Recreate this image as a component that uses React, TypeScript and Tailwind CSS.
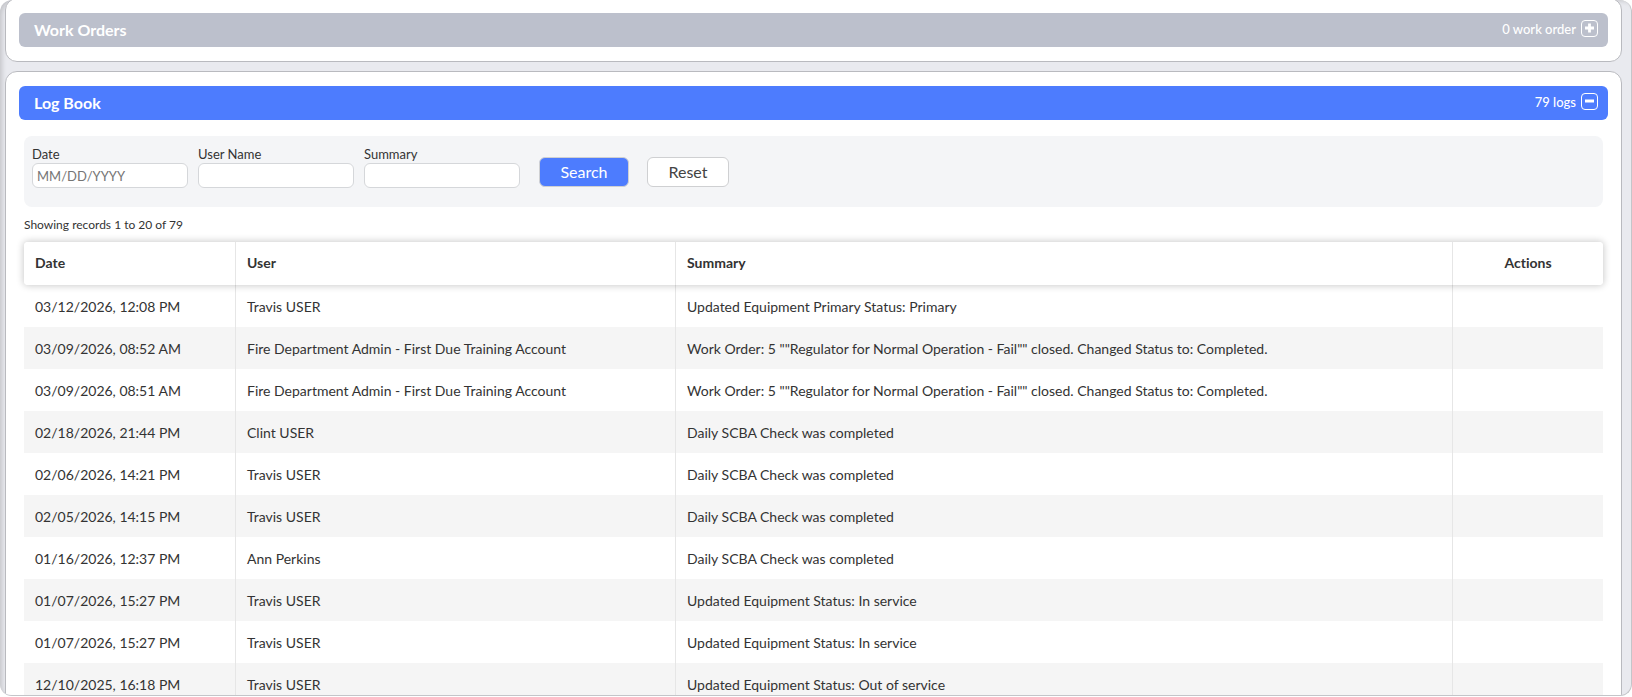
import type { ReactNode } from 'react';

type Log = { date: string; user: string; summary: string };

const admin = 'Fire Department Admin - First Due Training Account';
const workOrder =
  'Work Order: 5 ""Regulator for Normal Operation - Fail"" closed. Changed Status to: Completed.';

const logs: Log[] = [
  { date: '03/12/2026, 12:08 PM', user: 'Travis USER', summary: 'Updated Equipment Primary Status: Primary' },
  { date: '03/09/2026, 08:52 AM', user: admin, summary: workOrder },
  { date: '03/09/2026, 08:51 AM', user: admin, summary: workOrder },
  { date: '02/18/2026, 21:44 PM', user: 'Clint USER', summary: 'Daily SCBA Check was completed' },
  { date: '02/06/2026, 14:21 PM', user: 'Travis USER', summary: 'Daily SCBA Check was completed' },
  { date: '02/05/2026, 14:15 PM', user: 'Travis USER', summary: 'Daily SCBA Check was completed' },
  { date: '01/16/2026, 12:37 PM', user: 'Ann Perkins', summary: 'Daily SCBA Check was completed' },
  { date: '01/07/2026, 15:27 PM', user: 'Travis USER', summary: 'Updated Equipment Status: In service' },
  { date: '01/07/2026, 15:27 PM', user: 'Travis USER', summary: 'Updated Equipment Status: In service' },
  { date: '12/10/2025, 16:18 PM', user: 'Travis USER', summary: 'Updated Equipment Status: Out of service' },
];

function ToggleIcon({ open }: { open: boolean }) {
  return (
    <svg className="mb-0.5" width="17" height="17" viewBox="0 0 17 17" fill="none" stroke="currentColor">
      <rect x="0.5" y="0.5" width="16" height="16" rx="3.5" />
      <path d={open ? 'M4 8h9' : 'M4 8h9M8.5 3.5v9'} strokeWidth="2.8" />
    </svg>
  );
}

type SectionProps = { title: string; count: string; open?: boolean; children?: ReactNode };

function Section({ title, count, open = false, children }: SectionProps) {
  return (
    <section className="rounded-xl border border-[#b9babf] bg-white px-[13px] py-3.5">
      <div
        className={`flex h-[34px] items-center justify-between rounded-md pl-[15px] pr-2.5 text-white ${
          open ? 'bg-[#4d7cfe]' : 'bg-[#bcc0cc]'
        }`}
      >
        <h2 className="text-base font-bold">{title}</h2>
        <button
          type="button"
          aria-expanded={open}
          className="flex items-center gap-[5px] pb-0.5 text-[13px] leading-5 font-medium"
        >
          {count}
          <ToggleIcon open={open} />
        </button>
      </div>
      {children}
    </section>
  );
}

function Field({ id, label, placeholder }: { id: string; label: string; placeholder?: string }) {
  return (
    <div className="w-[156px]">
      <label htmlFor={id} className="block text-[13px] leading-[18px]">
        {label}
      </label>
      <input
        id={id}
        type="text"
        placeholder={placeholder}
        className="block h-[25px] w-full rounded-md border border-[#d5d7da] bg-white px-1 text-[13px] placeholder:text-[#757575]"
      />
    </div>
  );
}

export default function App() {
  return (
    <div className="h-screen bg-white pb-px font-['Lato',sans-serif] text-[#333] [font-variant-ligatures:none]">
      <div className="h-full overflow-hidden rounded-xl border-r border-b border-[#c4c5c9] bg-[#e9eaef] pr-[9px] pl-[5px] shadow-[inset_4px_3px_5px_-2px_rgba(0,0,0,0.16)]">
        <div className="-mt-0.5 flex flex-col gap-[9px]">
          {/* Work orders, collapsed */}
          <Section title="Work Orders" count="0 work order" />

          {/* Log book */}
          <Section title="Log Book" count="79 logs" open>
            <div className="mt-4 px-[5px]">
              <form className="flex h-[71px] gap-2.5 rounded-lg bg-[#f4f5f7] px-2 pt-[9px]">
                <Field id="date" label="Date" placeholder="MM/DD/YYYY" />
                <Field id="user" label="User Name" />
                <Field id="summary" label="Summary" />
                <div className="ml-[9px] flex gap-[18px] pt-3">
                  <button
                    type="button"
                    className="h-[30px] w-[90px] rounded-md border border-[#cfd0d2] bg-[#4d7cfe] text-base text-white"
                  >
                    Search
                  </button>
                  <button
                    type="button"
                    className="h-[30px] w-[82px] rounded-md border border-[#cfd0d2] bg-white text-base text-[#444]"
                  >
                    Reset
                  </button>
                </div>
              </form>

              <p className="mt-2 mb-[7px] text-xs leading-5">Showing records 1 to 20 of 79</p>

              <table className="w-full table-fixed border-separate border-spacing-0 text-left text-sm">
                <colgroup>
                  <col className="w-[212px]" />
                  <col className="w-[440px]" />
                  <col />
                  <col className="w-[150px]" />
                </colgroup>
                <thead className="relative rounded shadow-[0_0_7px_1px_rgba(0,0,0,0.2)]">
                  <tr className="h-[43px]">
                    <th className="rounded-l border-r border-[#e6e6e6] bg-white px-[11px] pb-0.5 font-bold">Date</th>
                    <th className="border-r border-[#e6e6e6] bg-white px-[11px] pb-0.5 font-bold">User</th>
                    <th className="border-r border-[#e6e6e6] bg-white px-[11px] pb-0.5 font-bold">Summary</th>
                    <th className="rounded-r bg-white px-[11px] pb-0.5 text-center font-bold">Actions</th>
                  </tr>
                </thead>
                <tbody>
                  {logs.map((log, i) => (
                    <tr key={i} className="h-[42px] even:bg-[#f5f5f5]">
                      <td className="border-r border-[#e6e6e6] px-[11px] pt-0.5">{log.date}</td>
                      <td className="border-r border-[#e6e6e6] px-[11px] pt-0.5">{log.user}</td>
                      <td className="border-r border-[#e6e6e6] px-[11px] pt-0.5">{log.summary}</td>
                      <td />
                    </tr>
                  ))}
                </tbody>
              </table>
            </div>
          </Section>
        </div>
      </div>
    </div>
  );
}
